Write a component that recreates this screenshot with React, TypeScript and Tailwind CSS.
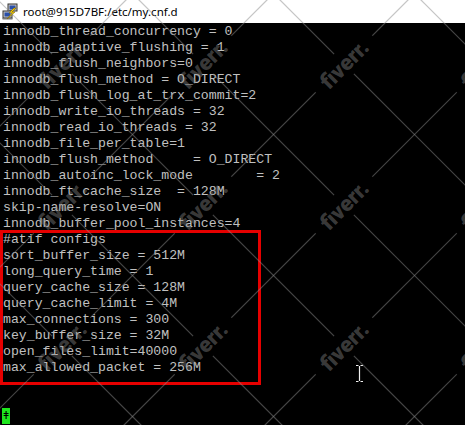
const lines = [
  "innodb_thread_concurrency = 0",
  "innodb_adaptive_flushing = 1",
  "innodb_flush_neighbors=0",
  "innodb_flush_method = O_DIRECT",
  "innodb_flush_log_at_trx_commit=2",
  "innodb_write_io_threads = 32",
  "innodb_read_io_threads = 32",
  "innodb_file_per_table=1",
  "innodb_flush_method     = O_DIRECT",
  "innodb_autoinc_lock_mode        = 2",
  "innodb_ft_cache_size  = 128M",
  "skip-name-resolve=ON",
  "innodb_buffer_pool_instances=4",
  "#atif configs",
  "sort_buffer_size = 512M",
  "long_query_time = 1",
  "query_cache_size = 128M",
  "query_cache_limit = 4M",
  "max_connections = 300",
  "key_buffer_size = 32M",
  "open_files_limit=40000",
  "max_allowed_packet = 256M",
  "",
  "",
];

const PuttyIcon = () => (
  <svg width="17" height="17" viewBox="0 0 17 17">
    <rect x="6" y="1" width="9" height="7" fill="#c8c8c8" stroke="#333" />
    <rect x="7.5" y="2.5" width="6" height="4" fill="#2a4fa8" />
    <rect x="1" y="8" width="9" height="7" fill="#c8c8c8" stroke="#333" />
    <rect x="2.5" y="9.5" width="6" height="4" fill="#2a4fa8" />
    <rect x="0.5" y="15" width="10" height="1.5" fill="#777" />
    <path d="M12 5 L7 10 L10 10 L5 16 L13 9 L10 9 L14 5 Z" fill="#f5d000" stroke="#8a6d00" strokeWidth="0.6" />
  </svg>
);

const Watermark = () => {
  const sum: number[] = [];
  for (let m = -1; m <= 7; m++) sum.push(126 + 141 * m);
  const diff: number[] = [];
  for (let n = -4; n <= 4; n++) diff.push(-2 + 141 * n);
  const marks: [number, number][] = [];
  for (let a = 0; a <= 3; a++) for (let b = 0; b <= 2; b++) marks.push([62 + 141 * a, 64 + 141 * b]);
  return (
    <svg className="absolute inset-0 pointer-events-none" width="465" height="425">
      <defs>
        <mask id="wm">
          <rect x="0" y="0" width="465" height="425" fill="white" />
          {marks.map(([x, y]) => (
            <rect key={`${x}-${y}`} x={x - 40} y={y - 14} width="80" height="28" fill="black" transform={`rotate(-45 ${x} ${y})`} />
          ))}
        </mask>
      </defs>
      <g mask="url(#wm)" stroke="rgba(140,140,140,0.5)" strokeWidth="1.2">
        {sum.map((c) => (
          <line key={`s${c}`} x1={c + 10} y1={-10} x2={c - 480} y2={480} />
        ))}
        {diff.map((c) => (
          <line key={`d${c}`} x1={-10} y1={-10 - c} x2={480} y2={480 - c} />
        ))}
      </g>
      {marks.map(([x, y]) => (
        <text
          key={`t${x}-${y}`}
          x={x}
          y={y + 8}
          textAnchor="middle"
          fontFamily="Roboto, sans-serif"
          fontWeight="900"
          fontSize="22"
          fill="rgba(140,140,140,0.42)"
          transform={`rotate(-45 ${x} ${y})`}
        >
          fiverr.
        </text>
      ))}
    </svg>
  );
};

export default function App() {
  return (
    <div className="relative w-[465px] h-[425px] overflow-hidden bg-black">
      <div className="flex items-center h-[23px] bg-white pl-[2px] gap-[4px]">
        <PuttyIcon />
        <span className="text-[11.5px] text-black font-['Noto_Sans',sans-serif]">root@915D7BF:/etc/my.cnf.d</span>
      </div>
      <div className="pt-[1px] pl-[3px] font-['Liberation_Mono',monospace] text-[13.2px] leading-[16px] text-[#c0c0c0] whitespace-pre">
        {lines.map((l, i) => (
          <div key={i} className="h-[16px]">
            {l}
          </div>
        ))}
        <div className="h-[16px] flex">
          <span className="w-[8px] h-[16px] -ml-[1px] bg-[#1ee61e] text-black text-center leading-[16px] font-['DejaVu_Sans_Mono',monospace] text-[11px]">
            ǂ
          </span>
        </div>
      </div>
      <div className="absolute left-0 top-[230px] w-[261px] h-[155px] border-[3px] border-[#e60000]" />
      <svg className="absolute left-[355px] top-[365px]" width="9" height="17" viewBox="0 0 9 17">
        <path d="M1 0.5 H3.5 M5.5 0.5 H8 M4.5 1 V16 M1 16.5 H3.5 M5.5 16.5 H8" stroke="#f0f0f0" strokeWidth="1.2" fill="none" />
      </svg>
      <Watermark />
    </div>
  );
}
